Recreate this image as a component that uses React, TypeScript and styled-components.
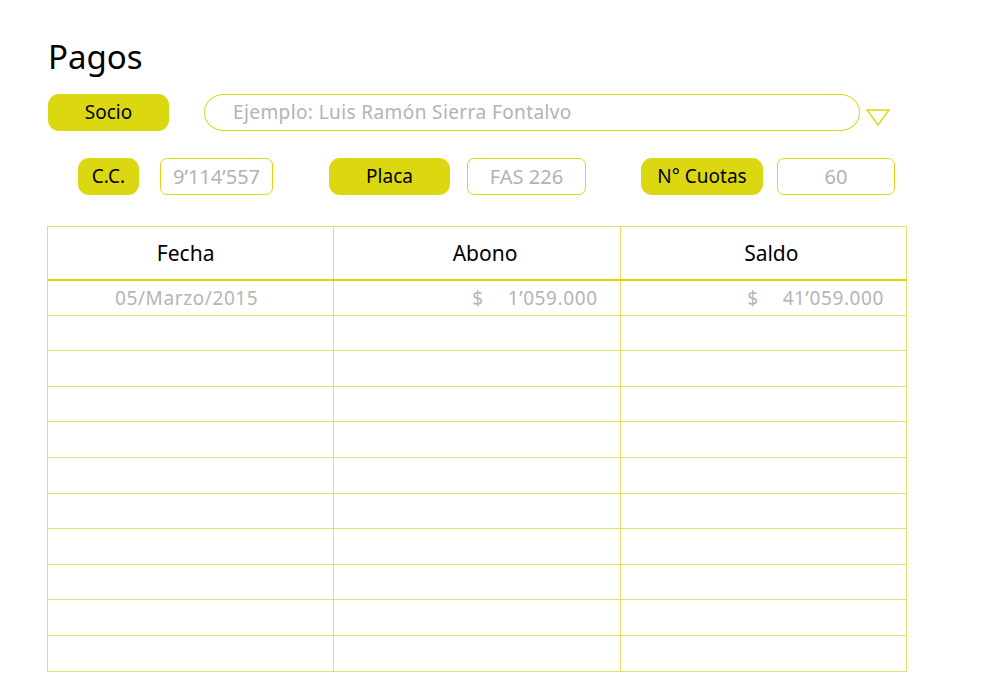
import React from "react";
import styled, { createGlobalStyle } from "styled-components";

const Global = createGlobalStyle`
  html, body { margin: 0; padding: 0; background: #ffffff; }
  body { font-family: "Comic Sans MS", "Noto Sans", "DejaVu Sans", sans-serif; }
  * { box-sizing: border-box; }
`;

const YELLOW = "#dbd812";
const LINE = "#e4e06a";

const Page = styled.div`
  width: 1000px;
  height: 700px;
  padding: 34px 0 0 47px;
  display: flex;
  flex-direction: column;
`;

const Title = styled.h1`
  margin: 0 0 0 1px;
  height: 52px;
  font-size: 33px;
  line-height: 46px;
  font-weight: 400;
  color: #000;
`;

const Row = styled.div<{ $mt: number; $ml?: number }>`
  display: flex;
  align-items: center;
  margin-top: ${(p) => p.$mt}px;
  margin-left: ${(p) => p.$ml ?? 0}px;
  height: 38px;
`;

const Pill = styled.div<{ $w: number }>`
  width: ${(p) => p.$w}px;
  height: 37px;
  background: ${YELLOW};
  border-radius: 11px;
  display: flex;
  align-items: center;
  justify-content: center;
  font-size: 19px;
  color: #000;
  flex-shrink: 0;
`;

const SearchBox = styled.div`
  width: 656px;
  height: 37px;
  margin-left: 35px;
  border: 1.5px solid ${YELLOW};
  border-radius: 20px / 18px;
  display: flex;
  align-items: center;
  padding-left: 28px;
  font-size: 19px;
  letter-spacing: 0.4px;
  color: #b3b3b3;
`;

const Caret = styled.svg`
  margin-left: 6px;
  margin-top: 12px;
  flex-shrink: 0;
`;

const Field = styled.div<{ $ml: number }>`
  display: flex;
  align-items: center;
  margin-left: ${(p) => p.$ml}px;
`;

const ValueBox = styled.div<{ $w: number; $gap: number }>`
  width: ${(p) => p.$w}px;
  height: 37px;
  margin-left: ${(p) => p.$gap}px;
  border: 1px solid ${YELLOW};
  border-radius: 7px;
  display: flex;
  align-items: center;
  justify-content: center;
  font-size: 20px;
  color: #b3b3b3;
`;

const Table = styled.table`
  margin-top: 31px;
  width: 860px;
  border-collapse: collapse;
  table-layout: fixed;
`;

const Th = styled.th<{ $shift: number }>`
  height: 53px;
  border: 1.5px solid ${LINE};
  border-bottom: 2px solid #dcd800;
  font-weight: 400;
  font-size: 21px;
  color: #000;
  text-align: center;
  padding: 0 ${(p) => (p.$shift < 0 ? -p.$shift * 2 : 0)}px 0 ${(p) => (p.$shift > 0 ? p.$shift * 2 : 0)}px;
`;

const Td = styled.td<{ $align?: "center" | "right" }>`
  height: 35.6px;
  border: 1.5px solid ${LINE};
  padding: 0 ${(p) => (p.$align === "right" ? 22 : 8)}px 0 0;
  font-size: 19px;
  letter-spacing: 0.6px;
  color: #b5b5b5;
  text-align: ${(p) => p.$align ?? "center"};
  white-space: pre;
`;

const Money = styled.span`
  display: inline-flex;
  gap: 24px;
`;

const rows = Array.from({ length: 10 });

export default function App() {
  return (
    <>
      <Global />
      <Page>
        <Title>Pagos</Title>
        <Row $mt={7} $ml={1}>
          <Pill $w={121}>Socio</Pill>
          <SearchBox>Ejemplo: Luis Ramón Sierra Fontalvo</SearchBox>
          <Caret width="24" height="18" viewBox="0 0 24 18">
            <polygon points="1,1 23,1 12,16" fill="none" stroke={YELLOW} strokeWidth="1.4" />
          </Caret>
        </Row>
        <Row $mt={26}>
          <Field $ml={31}>
            <Pill $w={61}>C.C.</Pill>
            <ValueBox $w={113} $gap={21}>9’114’557</ValueBox>
          </Field>
          <Field $ml={56}>
            <Pill $w={121}>Placa</Pill>
            <ValueBox $w={119} $gap={17}>FAS 226</ValueBox>
          </Field>
          <Field $ml={55}>
            <Pill $w={122}>N° Cuotas</Pill>
            <ValueBox $w={118} $gap={14}>60</ValueBox>
          </Field>
        </Row>
        <Table>
          <thead>
            <tr>
              <Th $shift={-5}>Fecha</Th>
              <Th $shift={8}>Abono</Th>
              <Th $shift={8}>Saldo</Th>
            </tr>
          </thead>
          <tbody>
            <tr>
              <Td>05/Marzo/2015</Td>
              <Td $align="right">
                <Money>
                  <span>$</span>
                  <span>1’059.000</span>
                </Money>
              </Td>
              <Td $align="right">
                <Money>
                  <span>$</span>
                  <span>41’059.000</span>
                </Money>
              </Td>
            </tr>
            {rows.map((_, i) => (
              <tr key={i}>
                <Td />
                <Td />
                <Td />
              </tr>
            ))}
          </tbody>
        </Table>
      </Page>
    </>
  );
}
